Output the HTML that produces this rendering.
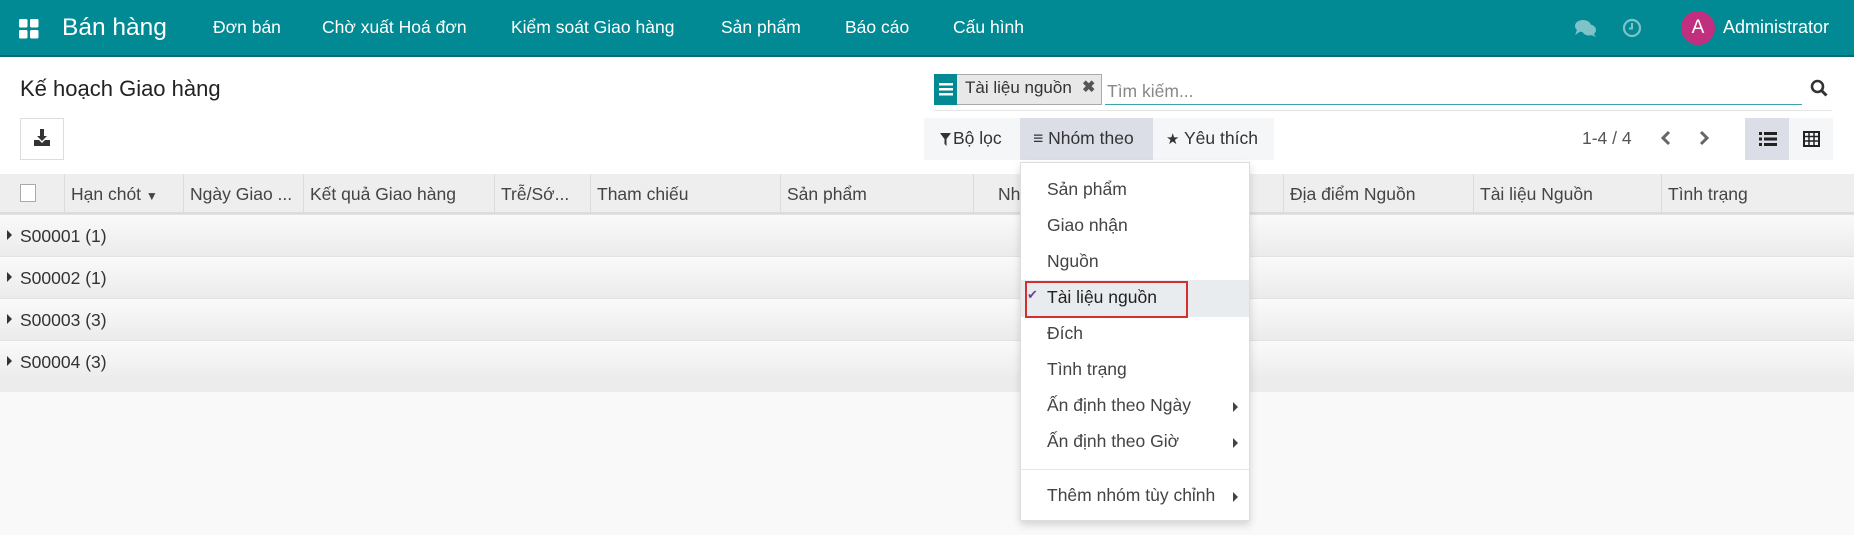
<!DOCTYPE html>
<html><head><meta charset="utf-8"><style>
*{box-sizing:border-box;margin:0;padding:0}
body{width:1854px;height:535px;overflow:hidden;background:#f9f9f9;font-family:"Liberation Sans",Roboto,sans-serif;color:#4c4c4c;position:relative;font-size:17px}
.abs{position:absolute;white-space:nowrap}
.nav{position:absolute;left:0;top:0;width:1854px;height:57px;background:#018a93;border-bottom:2px solid #016b73;color:#fff}
.nav .abs{top:17px;font-size:17.5px}
.top{position:absolute;left:0;top:57px;width:1854px;height:117px;background:#fff}
.th{position:absolute;top:174px;height:40px;left:0;width:1854px;background:#eeeeee;border-bottom:2px solid #dcdcdc}
.th .c{position:absolute;top:0;height:38px;border-left:1px solid #dcdcdc;padding:10px 0 0 6px;font-size:17.5px;color:#444}
.grp{position:absolute;left:0;width:1854px;height:42px;background:linear-gradient(#fafafa,#ebebeb);border-top:1px solid #e2e2e2;font-size:17.5px;color:#333}
.grp span{position:absolute;left:20px;top:11px}
.grp i{position:absolute;left:7px;top:15px;border-left:5px solid #333;border-top:5px solid transparent;border-bottom:5px solid transparent}
.dd{position:absolute;left:1020px;top:162px;width:230px;height:359px;background:#fff;border:1px solid #ddd;box-shadow:0 4px 8px rgba(0,0,0,.15)}
.dd .it{position:absolute;left:26px;font-size:17.5px;color:#444}
.arr{position:absolute;left:212px;border-left:5px solid #444;border-top:5px solid transparent;border-bottom:5px solid transparent}
</style></head><body>
<div class="nav">
  <svg class="abs" style="left:19px;top:19px" width="20" height="20"><rect x="0" y="0" width="8.5" height="8.5" rx="1.5" fill="#fff"/><rect x="11" y="0" width="8.5" height="8.5" rx="1.5" fill="#fff"/><rect x="0" y="11" width="8.5" height="8.5" rx="1.5" fill="#fff"/><rect x="11" y="11" width="8.5" height="8.5" rx="1.5" fill="#fff"/></svg>
  <div class="abs" style="left:62px;top:14px;font-size:24.5px">Bán hàng</div>
  <div class="abs" style="left:213px">Đơn bán</div>
  <div class="abs" style="left:322px">Chờ xuất Hoá đơn</div>
  <div class="abs" style="left:511px">Kiểm soát Giao hàng</div>
  <div class="abs" style="left:721px">Sản phẩm</div>
  <div class="abs" style="left:845px">Báo cáo</div>
  <div class="abs" style="left:953px">Cấu hình</div>
  <svg class="abs" style="left:1574px;top:18px" width="24" height="20"><ellipse cx="9" cy="8" rx="8" ry="6" fill="#7fc3c8"/><ellipse cx="15" cy="12" rx="7" ry="5.5" fill="#7fc3c8"/><path d="M3 12 L1 17 L7 13Z" fill="#7fc3c8"/><path d="M19 15 L22 19 L15 16Z" fill="#7fc3c8"/></svg>
  <svg class="abs" style="left:1622px;top:18px" width="20" height="20"><circle cx="10" cy="10" r="8" fill="none" stroke="#7fc3c8" stroke-width="2.2"/><path d="M10 5V10.5H7" fill="none" stroke="#7fc3c8" stroke-width="2"/></svg>
  <div class="abs" style="left:1681px;top:11px;width:34px;height:34px;border-radius:50%;background:#c1307f;text-align:center;line-height:34px;font-size:19px;color:#fff">A</div>
  <div class="abs" style="left:1723px;font-size:18px">Administrator</div>
</div>
<div class="top">
  <div class="abs" style="left:20px;top:19px;font-size:22px;color:#222">Kế hoạch Giao hàng</div>
  <div class="abs" style="left:20px;top:61px;width:44px;height:42px;border:1px solid #ddd;background:#fff"></div>
  <svg class="abs" style="left:33px;top:72px" width="18" height="18"><path d="M7 0h4v7h3l-5 5-5-5h3z" fill="#333"/><path d="M1 11h5l3 3 3-3h5v6H1z" fill="#333"/></svg>
  <div class="abs" style="left:934px;top:17px;width:168px;height:31px;border:1px solid #aaa;background:#e8e8e8"></div>
  <div class="abs" style="left:934px;top:17px;width:23px;height:31px;background:#018a93"></div>
  <svg class="abs" style="left:939px;top:25px" width="14" height="14"><rect y="1" width="14" height="2.5" fill="#fff"/><rect y="6" width="14" height="2.5" fill="#fff"/><rect y="11" width="14" height="2.5" fill="#fff"/></svg>
  <div class="abs" style="left:965px;top:21px;font-size:17px;color:#333">Tài liệu nguồn</div>
  <div class="abs" style="left:1082px;top:20px;font-size:16px;color:#555;font-weight:bold">✖</div>
  <div class="abs" style="left:1107px;top:24px;font-size:17.5px;color:#888">Tìm kiếm...</div>
  <div class="abs" style="left:1105px;top:47px;width:697px;height:1px;background:#3aa5ad"></div>
  <div class="abs" style="left:934px;top:53px;width:898px;height:1px;background:#e5e5e5"></div>
  <svg class="abs" style="left:1810px;top:22px" width="18" height="18"><circle cx="7.5" cy="7.5" r="5.5" fill="none" stroke="#333" stroke-width="2.6"/><path d="M11.5 11.5L16.5 16.5" stroke="#333" stroke-width="3"/></svg>
  <div class="abs" style="left:924px;top:61px;width:350px;height:42px;background:#f5f6f8"></div>
  <div class="abs" style="left:1020px;top:61px;width:133px;height:42px;background:#dbdee7"></div>
  <svg class="abs" style="left:940px;top:76px" width="11" height="13"><path d="M0 0h11L6.5 6v7L4.5 11V6z" fill="#333"/></svg>
  <div class="abs" style="left:953px;top:71px;font-size:17.5px;color:#333">Bộ lọc</div>
  <div class="abs" style="left:1033px;top:71px;font-size:17.5px;color:#333">≡ Nhóm theo</div>
  <div class="abs" style="left:1166px;top:71px;font-size:17.5px;color:#333"><span style="font-size:15px">★</span> Yêu thích</div>
  <div class="abs" style="left:1582px;top:71px;font-size:17.5px;color:#555">1-4 / 4</div>
  <svg class="abs" style="left:1660px;top:73px" width="12" height="16"><path d="M9 2L3 8l6 6" fill="none" stroke="#666" stroke-width="3"/></svg>
  <svg class="abs" style="left:1698px;top:73px" width="12" height="16"><path d="M3 2l6 6-6 6" fill="none" stroke="#666" stroke-width="3"/></svg>
  <div class="abs" style="left:1745px;top:61px;width:44px;height:42px;background:#dbdee7"></div>
  <div class="abs" style="left:1789px;top:61px;width:44px;height:42px;background:#f5f6f8"></div>
  <svg class="abs" style="left:1759px;top:74px" width="18" height="16"><rect x="0" y="1" width="3" height="3" fill="#222"/><rect x="5" y="1" width="13" height="3" fill="#222"/><rect x="0" y="6.5" width="3" height="3" fill="#222"/><rect x="5" y="6.5" width="13" height="3" fill="#222"/><rect x="0" y="12" width="3" height="3" fill="#222"/><rect x="5" y="12" width="13" height="3" fill="#222"/></svg>
  <svg class="abs" style="left:1803px;top:74px" width="17" height="16"><rect x="1" y="1" width="15" height="14" fill="none" stroke="#222" stroke-width="2"/><path d="M1 5.5h15M1 10h15M6 1v14M11 1v14" stroke="#222" stroke-width="1.5"/></svg>
</div>
<div class="th">
  <div class="abs" style="left:20px;top:10px;width:16px;height:18px;border:1px solid #aaa;background:#fff"></div>
  <div class="c" style="left:64px;width:119px">Hạn chót <span style="font-size:12px">▼</span></div>
  <div class="c" style="left:183px;width:120px">Ngày Giao ...</div>
  <div class="c" style="left:303px;width:191px">Kết quả Giao hàng</div>
  <div class="c" style="left:494px;width:96px">Trễ/Sớ...</div>
  <div class="c" style="left:590px;width:190px">Tham chiếu</div>
  <div class="c" style="left:780px;width:193px">Sản phẩm</div>
  <div class="c" style="left:973px;width:310px;padding-left:24px">Nh</div>
  <div class="c" style="left:1283px;width:190px">Địa điểm Nguồn</div>
  <div class="c" style="left:1473px;width:188px">Tài liệu Nguồn</div>
  <div class="c" style="left:1661px;width:193px">Tình trạng</div>
</div>
<div class="grp" style="top:214px"><i></i><span>S00001 (1)</span></div>
<div class="grp" style="top:256px"><i></i><span>S00002 (1)</span></div>
<div class="grp" style="top:298px"><i></i><span>S00003 (3)</span></div>
<div class="grp" style="top:340px"><i></i><span>S00004 (3)</span></div>
<div class="abs" style="left:0;top:382px;width:1854px;height:10px;background:#ececec"></div>
<div class="dd">
  <div class="it" style="top:16px">Sản phẩm</div>
  <div class="it" style="top:52px">Giao nhận</div>
  <div class="it" style="top:88px">Nguồn</div>
  <div class="abs" style="left:0;top:117px;width:228px;height:37px;background:#e9ecef"></div>
  <div class="abs" style="left:4px;top:118px;width:163px;height:37px;border:2.5px solid #d32f2f"></div>
  <div class="abs" style="left:6px;top:124px;font-size:13px;color:#6f42a0">✔</div>
  <div class="it" style="top:124px;color:#222">Tài liệu nguồn</div>
  <div class="it" style="top:160px">Đích</div>
  <div class="it" style="top:196px">Tình trạng</div>
  <div class="it" style="top:232px">Ấn định theo Ngày</div><i class="arr" style="top:239px"></i>
  <div class="it" style="top:268px">Ấn định theo Giờ</div><i class="arr" style="top:275px"></i>
  <div class="abs" style="left:0;top:306px;width:228px;height:1px;background:#e5e5e5"></div>
  <div class="it" style="top:322px">Thêm nhóm tùy chỉnh</div><i class="arr" style="top:329px"></i>
</div>
</body></html>
